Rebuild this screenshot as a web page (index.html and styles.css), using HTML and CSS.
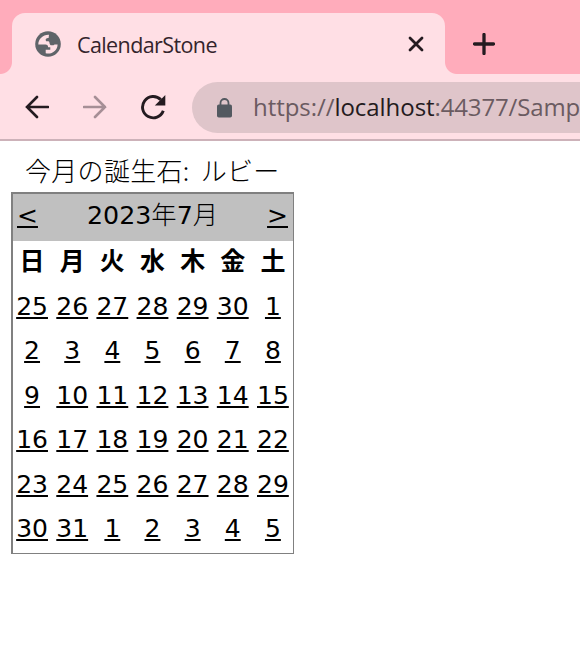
FILE: index.html
```html
<!DOCTYPE html>
<html lang="ja">
<head>
<meta charset="utf-8">
<title>CalendarStone</title>
<link rel="stylesheet" href="styles.css">
</head>
<body>
<header class="browser">
  <div class="tabs">
    <div class="tab">
      <svg class="globe" viewBox="0 0 26 26"><circle cx="13" cy="13" r="12.8" fill="#5f6469"/><path d="M14 3.7C8 3.4 3.3 8 3.3 13.4h7.2c1.8 0 2.6.8 2.6 2.8h2.2v2.5h-4.6v3.5c6 1.5 11.8-2.7 11.9-8.8h-3.2c-.8 1.2-3.6 1.2-4.4 0-.8-1.4-.2-2.9-1.5-3.2h-2.3c-1.3-2 .2-3.2 2.4-3.2z" fill="#ffdfe5"/></svg>
      <span class="tab-title">CalendarStone</span>
      <svg class="close" viewBox="0 0 16 16"><path d="M2 2l12 12M14 2L2 14"/></svg>
    </div>
    <svg class="plus" viewBox="0 0 22 22"><path d="M11 1.5v19M1.5 11h19"/></svg>
  </div>
  <div class="toolbar">
    <svg class="arrow" viewBox="0 0 24 24"><path d="M23 12H2M12 2L2 12l10 10"/></svg>
    <svg class="arrow forward" viewBox="0 0 24 24"><path d="M1 12h21M12 2l10 10-10 10"/></svg>
    <svg class="reload" viewBox="0 0 26 26"><path d="M23.3 16.8A10.7 10.7 0 1 1 20.8 5.6" fill="none" stroke="#241b20" stroke-width="2.9"/><path d="M25.3 1v10.4H14.8z" fill="#241b20"/></svg>
    <div class="address">
      <svg class="lock" viewBox="0 0 15 20"><path d="M3.5 8V5a4 4 0 0 1 8 0v3" fill="none" stroke="#535960" stroke-width="1.8"/><rect y="6.5" width="15" height="13" rx="1.8" fill="#535960"/></svg>
      <span class="url"><span class="scheme">https://</span><span class="host">localhost</span><span class="path">:44377/Samp</span></span>
    </div>
  </div>
</header>
<main>
  <p class="stone">今月の誕生石: ルビー</p>
  <section class="calendar">
    <div class="month"><a>&lt;</a><span>2023<i>年</i>7<i>月</i></span><a>&gt;</a></div>
    <div class="grid weekdays"><b>日</b><b>月</b><b>火</b><b>水</b><b>木</b><b>金</b><b>土</b></div>
    <div class="grid days">
      <a>25</a><a>26</a><a>27</a><a>28</a><a>29</a><a>30</a><a>1</a>
      <a>2</a><a>3</a><a>4</a><a>5</a><a>6</a><a>7</a><a>8</a>
      <a>9</a><a>10</a><a>11</a><a>12</a><a>13</a><a>14</a><a>15</a>
      <a>16</a><a>17</a><a>18</a><a>19</a><a>20</a><a>21</a><a>22</a>
      <a>23</a><a>24</a><a>25</a><a>26</a><a>27</a><a>28</a><a>29</a>
      <a>30</a><a>31</a><a>1</a><a>2</a><a>3</a><a>4</a><a>5</a>
    </div>
  </section>
</main>
</body>
</html>
```
FILE: styles.css
```css
* { box-sizing: border-box; }
body {
  margin: 0;
  height: 659px;
  overflow: hidden;
  background: #fff;
  color: #000;
  font-family: "DejaVu Sans", "Noto Sans CJK JP", sans-serif;
}
svg { display: block; flex: none; }
.browser {
  height: 141px;
  background: #ffdfe5;
  border-bottom: 2px solid #cdb2b9;
}
.tabs {
  display: flex;
  height: 74px;
  padding: 13px 0 0 12px;
  background: #ffacbb;
}
.tab {
  position: relative;
  display: flex;
  align-items: center;
  width: 433px;
  height: 61px;
  padding: 0 21px 0 23px;
  border-radius: 13px 13px 0 0;
  background: #ffdfe5;
}
.tab::before, .tab::after {
  content: "";
  position: absolute;
  bottom: 0;
  width: 12px;
  height: 12px;
}
.tab::before { left: -12px; background: radial-gradient(circle at 0 0, #ffacbb 11.5px, #ffdfe5 12.5px); }
.tab::after { right: -12px; background: radial-gradient(circle at 100% 0, #ffacbb 11.5px, #ffdfe5 12.5px); }
.globe { width: 26px; height: 26px; }
.tab-title {
  flex: 1;
  margin: 3px 0 0 16px;
  font: 21.5px/30px "Open Sans", sans-serif;
  letter-spacing: -0.6px;
  color: #34242c;
}
.close { width: 16px; height: 16px; fill: none; stroke: #241b20; stroke-width: 2.8; stroke-linecap: round; }
.plus { width: 22px; height: 22px; margin: 20px 0 0 28px; fill: none; stroke: #241b20; stroke-width: 3.3; stroke-linecap: round; }
.toolbar {
  display: flex;
  align-items: center;
  height: 65px;
  padding-left: 25px;
}
.arrow { width: 24px; height: 24px; fill: none; stroke: #241b20; stroke-width: 2.6; stroke-linecap: round; }
.forward { margin-left: 34px; stroke: #a68f96; }
.reload { width: 26px; height: 26px; margin-left: 33px; }
.address {
  display: flex;
  align-items: center;
  flex: 1;
  min-width: 0;
  height: 51px;
  margin: 2px 0 0 26px;
  padding-left: 25px;
  border-radius: 26px 0 0 26px;
  background: #dfc5ca;
  overflow: hidden;
}
.lock { width: 15px; height: 20px; }
.url {
  margin: -2px 0 0 21px;
  font: 24px/36px "Open Sans", sans-serif;
  letter-spacing: -0.05px;
  white-space: nowrap;
  color: #6b5b61;
}
.host { color: #241b20; }
.path { letter-spacing: -0.15px; }
.stone {
  height: 51px;
  margin: 0;
  padding: 9px 0 0 25px;
  font-family: "Noto Sans CJK JP", sans-serif;
  font-size: 26px;
  line-height: 40px;
  font-weight: 300;
  word-spacing: 5px;
  letter-spacing: 0.3px;
  white-space: nowrap;
}
.calendar {
  width: 283px;
  height: 362px;
  margin-left: 11px;
  border: 1px solid #808080;
  border-width: 2px 1px 1px 2px;
  font-size: 25px;
}
.month {
  display: flex;
  justify-content: space-between;
  height: 47px;
  padding: 0 5px 0 4px;
  background: #c0c0c0;
  line-height: 44px;
}
.month span { font-size: 25.3px; }
.month i { font-style: normal; font-weight: 300; line-height: 1; font-family: "Noto Sans CJK JP", sans-serif; }
.grid {
  display: grid;
  grid-template-columns: repeat(7, 1fr);
  width: 281px;
  margin-left: -1px;
  justify-items: center;
}
.weekdays { height: 43px; line-height: 41px; }
.days { padding-top: 0.5px; grid-auto-rows: 44.5px; line-height: 44px; }
a { text-decoration: underline; text-decoration-thickness: 2px; text-underline-offset: 2px; }
```
